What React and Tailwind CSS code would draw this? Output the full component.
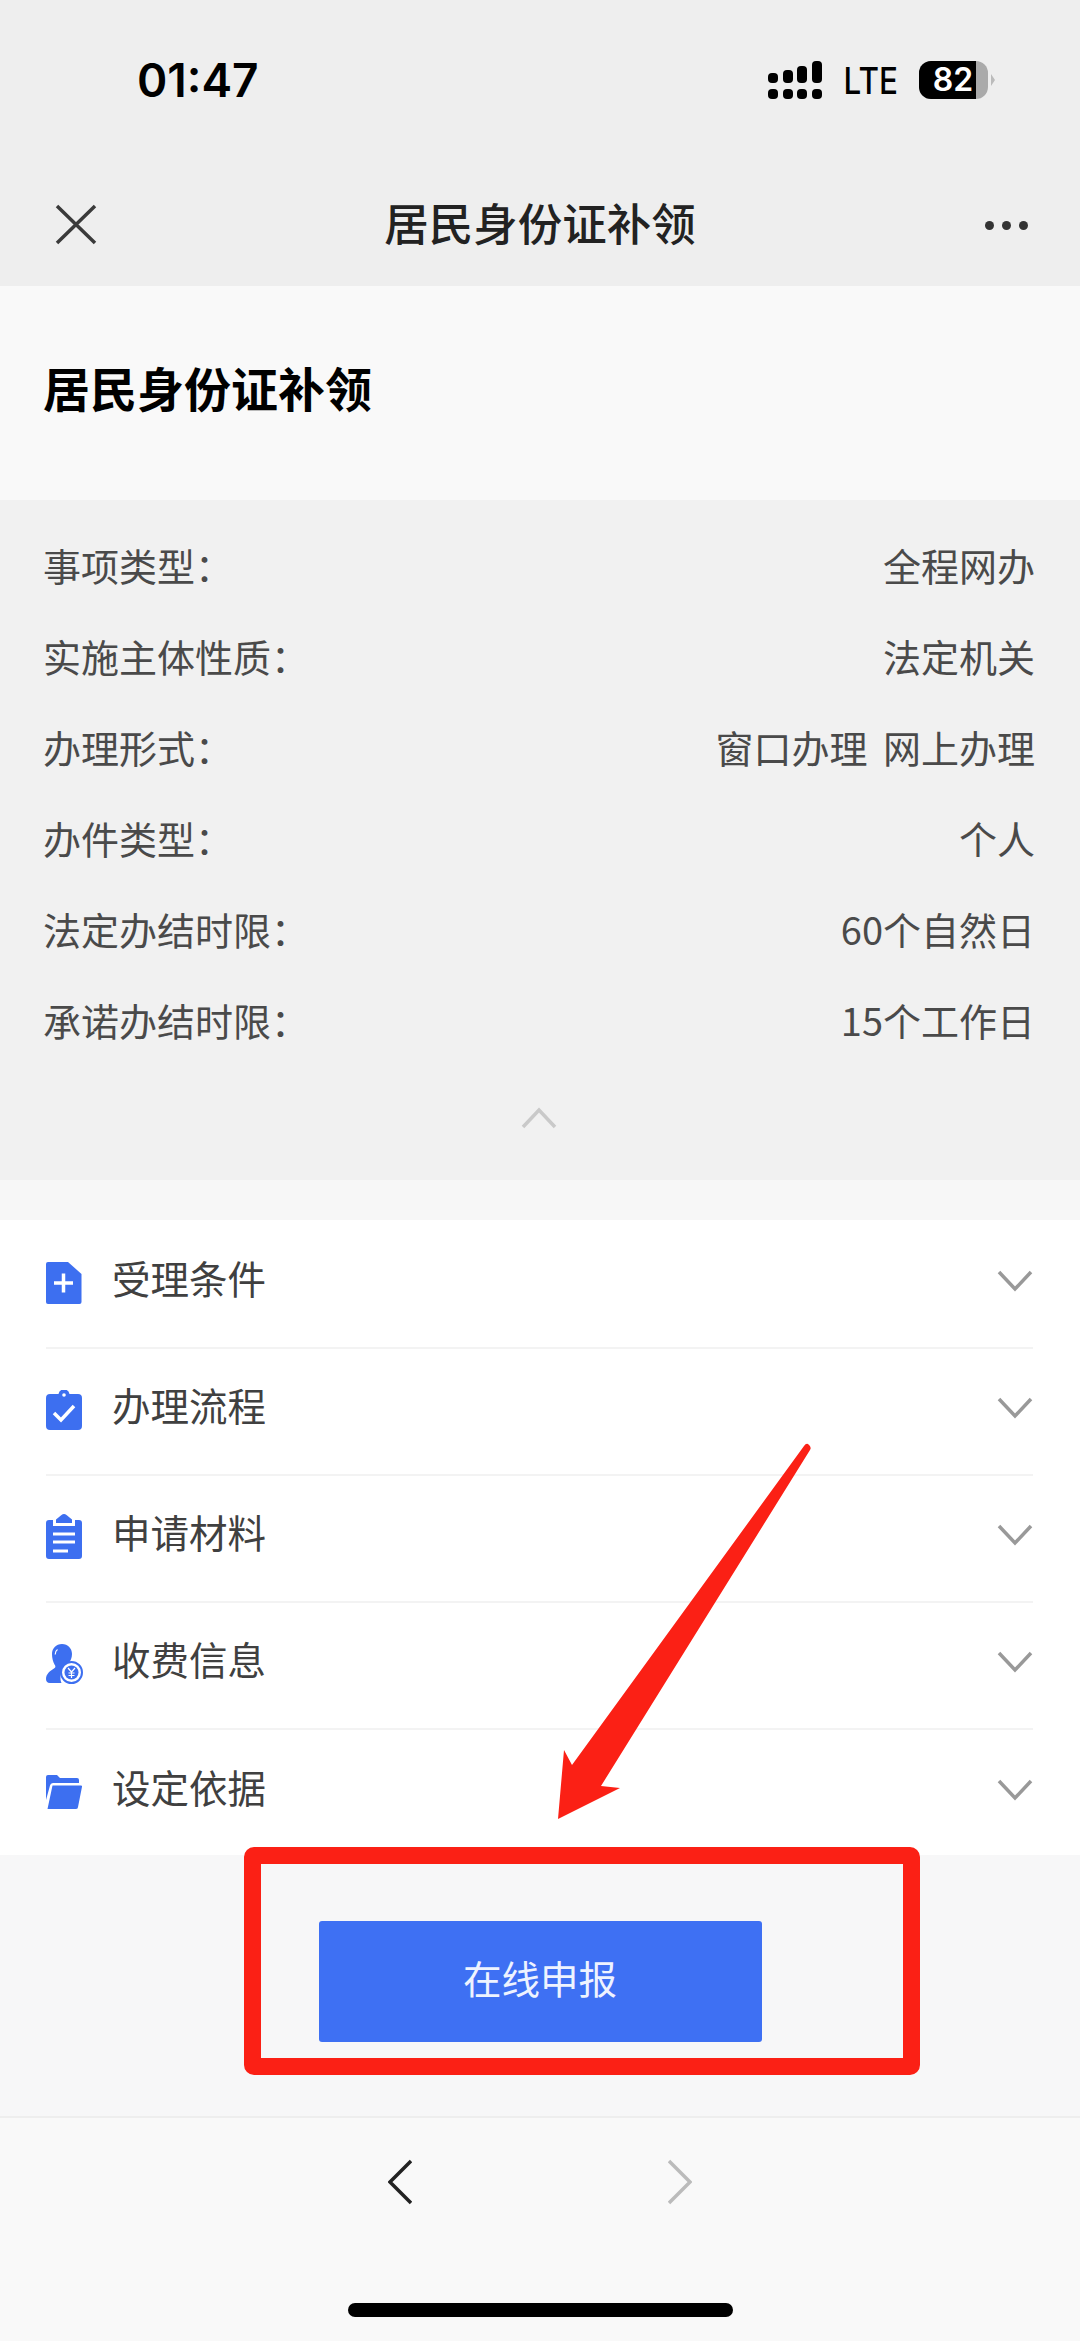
const cjk = '"Noto Sans CJK SC", sans-serif'

const details = [
  ['事项类型：', '全程网办'],
  ['实施主体性质：', '法定机关'],
  ['办理形式：', '窗口办理 网上办理'],
  ['办件类型：', '个人'],
  ['法定办结时限：', '60个自然日'],
  ['承诺办结时限：', '15个工作日'],
]

const BLUE = '#3d6ff0'

function FileIcon() {
  return (
    <svg width="36" height="42" viewBox="0 0 36 42">
      <path d="M2 0H22L35.500 12V40a2 2 0 0 1-2 2H2a2 2 0 0 1-2-2V2a2 2 0 0 1 2-2z" fill={BLUE} />
      <path d="M17.500 11.500v19M8 21h19" stroke="#fff" strokeWidth="3.500" />
    </svg>
  )
}

function CheckIcon() {
  return (
    <svg width="36" height="40" viewBox="0 0 36 40">
      <path d="M4 4H12.500a5.600 5.600 0 0 1 11 0H32a4 4 0 0 1 4 4V36a4 4 0 0 1-4 4H4a4 4 0 0 1-4-4V8a4 4 0 0 1 4-4z" fill={BLUE} />
      <circle cx="18" cy="5" r="1.800" fill="#fff" />
      <path d="M8 23l7 7L28 16" fill="none" stroke="#fff" strokeWidth="3.500" />
    </svg>
  )
}

function ListIcon() {
  return (
    <svg width="36" height="45" viewBox="0 0 36 45">
      <path d="M3 6h4v6h22V6h4a3 3 0 0 1 3 3V42a3 3 0 0 1-3 3H3a3 3 0 0 1-3-3V9a3 3 0 0 1 3-3z" fill={BLUE} />
      <path d="M10 9V5.500L15.500 1a4 4 0 0 1 5 0L26 5.500V9z" fill={BLUE} />
      <path d="M7 20H29M7 28H29M7 37H22" stroke="#fff" strokeWidth="3" />
    </svg>
  )
}

function FeeIcon() {
  return (
    <svg width="38" height="40" viewBox="0 0 38 40">
      <path d="M16 0c6 0 10 4.500 10 10 0 4-1.500 7-3.500 9.500-5 2.500-8.500 8-8 15.500 0 1 .5 3 1 4H4c-3 0-4-2-4-4 0-5 4-8 8-10.500 1.500-1 2-2 .5-4C7 18 6 14 6 10 6 4.500 10 0 16 0z" fill={BLUE} />
      <path d="M11.500 5.500c-1.500 1-2.300 3-2.300 5" fill="none" stroke="#fff" strokeWidth="1.200" />
      <circle cx="25.500" cy="28.500" r="10.500" fill="#fff" stroke={BLUE} strokeWidth="2" />
      <circle cx="25.500" cy="28.500" r="7" fill={BLUE} />
      <path d="M22 24l3.500 4 3.500-4M25.500 28v6M22.500 29h6M22.500 31.500h6" fill="none" stroke="#fff" strokeWidth="1.200" />
    </svg>
  )
}

function FolderIcon() {
  return (
    <svg width="36" height="35" viewBox="0 0 36 35">
      <path d="M0 3a2 2 0 0 1 2-2h9l3 3h17a2 2 0 0 1 2 2v3H7a3 3 0 0 0-3 2.500L0 26z" fill={BLUE} />
      <path d="M6.500 11.500H35a1 1 0 0 1 1 1.200L32 33a2 2 0 0 1-2 2H1.500z" fill={BLUE} />
    </svg>
  )
}

const rows = [
  { label: '受理条件', icon: <FileIcon /> },
  { label: '办理流程', icon: <CheckIcon /> },
  { label: '申请材料', icon: <ListIcon /> },
  { label: '收费信息', icon: <FeeIcon /> },
  { label: '设定依据', icon: <FolderIcon /> },
]

function Signal() {
  const xs = [769, 784, 798, 813]
  const tops = [73, 70, 66, 61]
  return (
    <svg width="54" height="38" viewBox="769 61 54 38">
      {xs.map((x, i) => (
        <g key={x}>
          <rect x={x} y={tops[i]} width="10" height={83 - tops[i]} rx="4" fill="#000" />
          <rect x={x} y="89" width="10" height="10" rx="4" fill="#000" />
        </g>
      ))}
    </svg>
  )
}

function Battery() {
  return (
    <div className="flex items-center">
      <div className="w-[69px] h-[38px] rounded-[12px] overflow-hidden bg-[#aaaaaa]">
        <div className="w-[57px] h-full bg-black flex items-center justify-center pl-[11px] text-white text-[32px] leading-none font-semibold font-['Inter']">
          82
        </div>
      </div>
      <div className="ml-[3px] w-0 h-0 border-y-[6px] border-y-transparent border-l-[4px] border-l-[#bbbbbb]" />
    </div>
  )
}

export default function App() {
  return (
    <div className="relative w-[1080px] h-[2341px] overflow-hidden flex flex-col bg-[#f8f8f8]" style={{ fontFamily: cjk }}>
      {/* status bar */}
      <div className="h-[160px] bg-[#eeeeee] flex items-center justify-between pl-[137px] pr-[85px]">
        <div className="text-[46px] font-semibold text-black font-['Inter'] leading-none">01:47</div>
        <div className="flex items-center">
          <Signal />
          <div className="ml-[12px] mr-[21px] text-[37px] font-medium text-black font-['Inter'] leading-none scale-x-[0.85] origin-right">LTE</div>
          <Battery />
        </div>
      </div>

      {/* nav */}
      <div className="h-[126px] bg-[#eeeeee] pt-[4px] px-[52px] grid grid-cols-[1fr_auto_1fr] items-center">
        <svg width="46" height="46" viewBox="0 0 46 46">
          <path d="M5 4L43 41M43 4L5 41" stroke="#3a3a3a" strokeWidth="3.500" />
        </svg>
        <div className="text-[44.500px] font-medium text-[#222222] leading-none mb-[6px]">居民身份证补领</div>
        <div className="flex justify-end gap-[8px]">
          <span className="w-[9px] h-[9px] rounded-full bg-[#333333]" />
          <span className="w-[9px] h-[9px] rounded-full bg-[#333333]" />
          <span className="w-[9px] h-[9px] rounded-full bg-[#333333]" />
        </div>
      </div>

      {/* heading */}
      <div className="h-[214px] bg-[#f9f9f9] flex items-center pl-[43px] pb-[14px]">
        <h1 className="text-[47px] font-bold text-black leading-none">居民身份证补领</h1>
      </div>

      {/* details */}
      <div className="h-[680px] bg-[#f1f1f1] pt-[23px] pl-[43px] pr-[45px]">
        {details.map(([k, v]) => (
          <div key={k} className="h-[91px] flex items-center justify-between text-[38px] text-[#4a4a4a] leading-none">
            <span className="mb-[7px]">{k}</span>
            <span className="mb-[7px] [word-spacing:7px]">{v}</span>
          </div>
        ))}
        <div className="flex justify-center mt-[38px]">
          <svg width="36" height="22" viewBox="0 0 36 22">
            <path d="M2 20L18 3L34 20" fill="none" stroke="#c9c9c9" strokeWidth="3.500" />
          </svg>
        </div>
      </div>

      <div className="h-[40px] bg-[#f7f7f7]" />

      {/* list */}
      <div className="h-[635px] bg-white pt-[2px] pl-[46px] pr-[47px]">
        {rows.map((r, i) => (
          <div key={r.label} className={`h-[127px] flex items-center justify-between ${i < rows.length - 1 ? 'border-b-2 border-[#f3f3f3]' : ''}`}>
            <div className="flex items-center">
              <div className="w-[66px] flex items-center mb-[4px]">{r.icon}</div>
              <span className="text-[38.500px] text-[#404040] leading-none mb-[14px]">{r.label}</span>
            </div>
            <svg width="36" height="22" viewBox="0 0 36 22" className="mb-[8px]">
              <path d="M2 2L18 19L34 2" fill="none" stroke="#999999" strokeWidth="3.500" />
            </svg>
          </div>
        ))}
      </div>

      {/* submit */}
      <div className="h-[263px] bg-[#f7f7f8] pt-[66px] flex flex-col items-center border-b-2 border-[#eeeeee]">
        <button className="w-[443px] h-[121px] bg-[#3e70f3] rounded-[3px] text-[38.500px] text-[#eef3ff] leading-none pb-[8px]">在线申报</button>
      </div>

      {/* bottom bar */}
      <div className="flex-1 bg-[#f9f9f9] pt-[41px] flex flex-col items-center">
        <div className="flex items-center gap-[256px]">
          <svg width="24" height="46" viewBox="0 0 24 46">
            <path d="M23 2L2 23L23 44" fill="none" stroke="#222222" strokeWidth="3.500" />
          </svg>
          <svg width="24" height="46" viewBox="0 0 24 46">
            <path d="M1 2L22 23L1 44" fill="none" stroke="#bbbbbb" strokeWidth="3.500" />
          </svg>
        </div>
        <div className="mt-[98px] w-[385px] h-[14px] rounded-full bg-black" />
      </div>

      {/* red annotation drawn over the screenshot */}
      <div className="absolute left-[244px] top-[1847px] w-[676px] h-[228px] border-[17px] border-[#fb2015] rounded-[10px]" />
      <svg className="absolute left-0 top-0 pointer-events-none" width="1080" height="2341">
        <path d="M808 1444Q812 1447 810 1450L601 1786L620 1788L558 1819L564 1750L572 1765L804 1446Q806 1443 808 1444z" fill="#fb2015" />
      </svg>
    </div>
  )
}
